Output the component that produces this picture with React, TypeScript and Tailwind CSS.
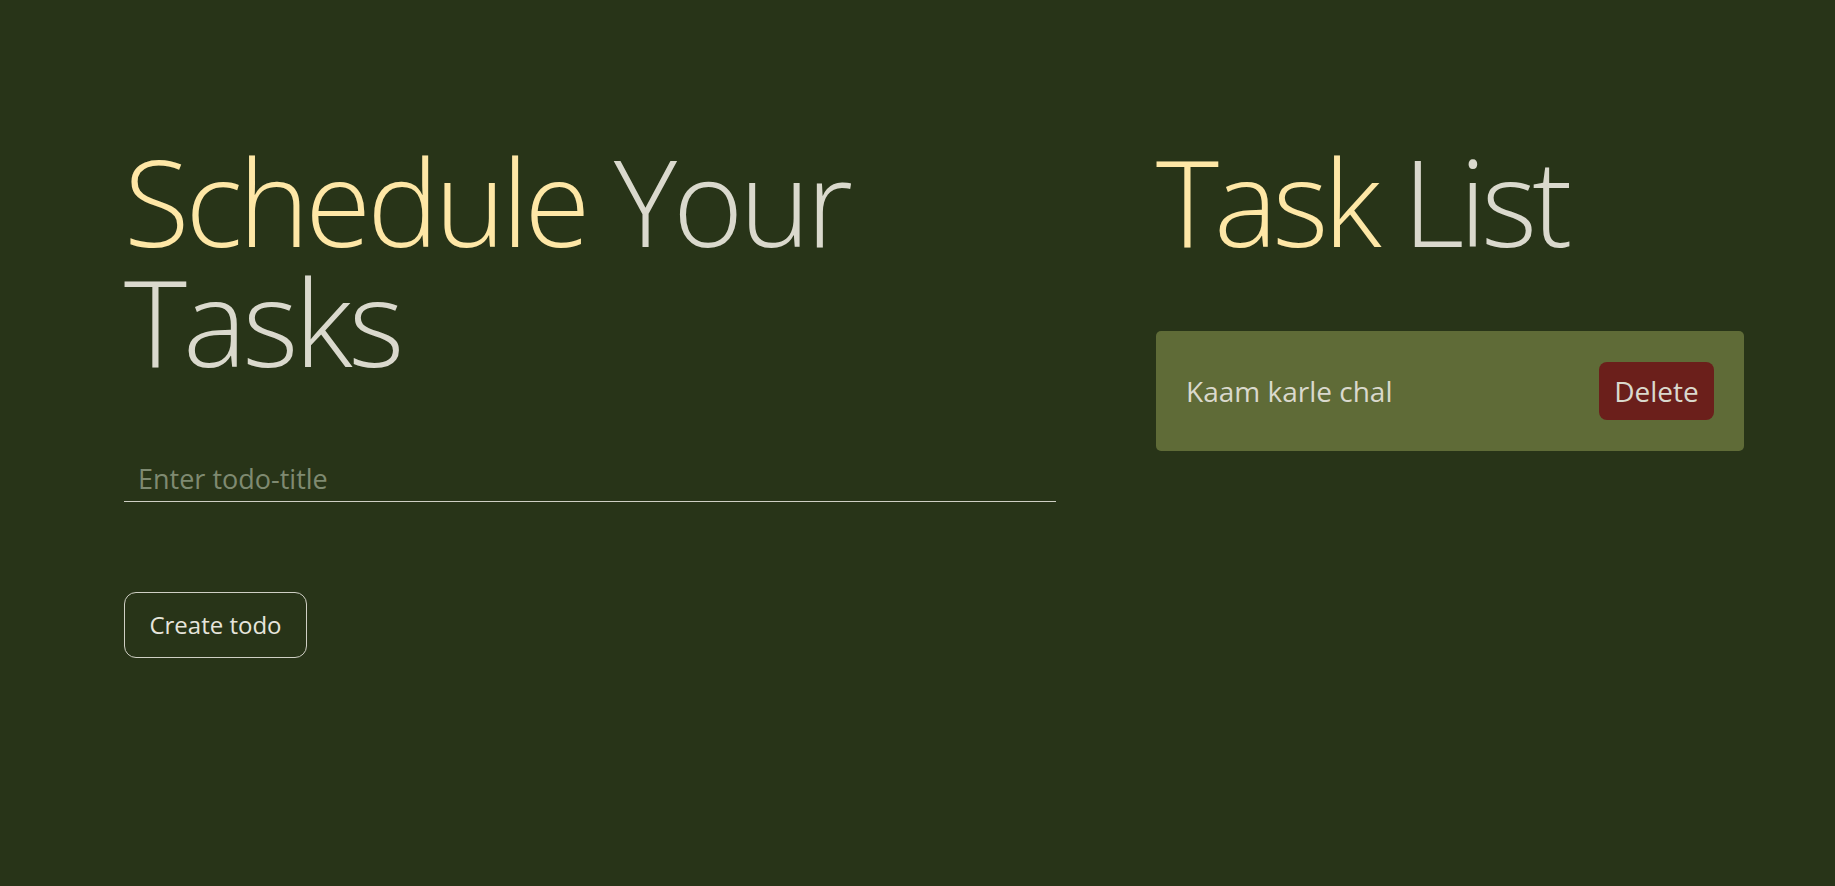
export default function App() {
  return (
    <div className="min-h-screen bg-[#283418] font-['Open_Sans',sans-serif] text-[#dad9cd]">
      <div className="flex gap-[100px] pl-[124px] pt-[141px]">
        <div className="w-[932px]">
          <h1 className="text-[120px] font-light leading-[120px] tracking-[-4px]">
            <span className="text-[#fee7a6]">Schedule</span> Your Tasks
          </h1>
          <div className="mt-[78px]">
            <input
              type="text"
              placeholder="Enter todo-title"
              className="w-full border-b border-[#cfcfc4] bg-transparent px-[14px] pb-[1px] text-[27px] text-[#dad9cd] outline-none placeholder:text-[#7f8a71]"
            />
          </div>
          <button className="mt-[90px] h-[66px] w-[183px] rounded-[12px] border border-[#cfcfc4] text-[24px] text-[#e6e5dc]">
            Create todo
          </button>
        </div>
        <div className="w-[588px]">
          <h1 className="text-[120px] font-light leading-[120px] tracking-[-5px]">
            <span className="text-[#fee7a6]">Task</span> List
          </h1>
          <ul className="mt-[70px]">
            <li className="flex items-center justify-between rounded-[5px] bg-[#5f6b37] px-[30px] py-[31px]">
              <span className="text-[28px]">Kaam karle chal</span>
              <button className="h-[58px] w-[115px] rounded-[8px] bg-[#6b1f1b] text-[28px]">
                Delete
              </button>
            </li>
          </ul>
        </div>
      </div>
    </div>
  );
}
